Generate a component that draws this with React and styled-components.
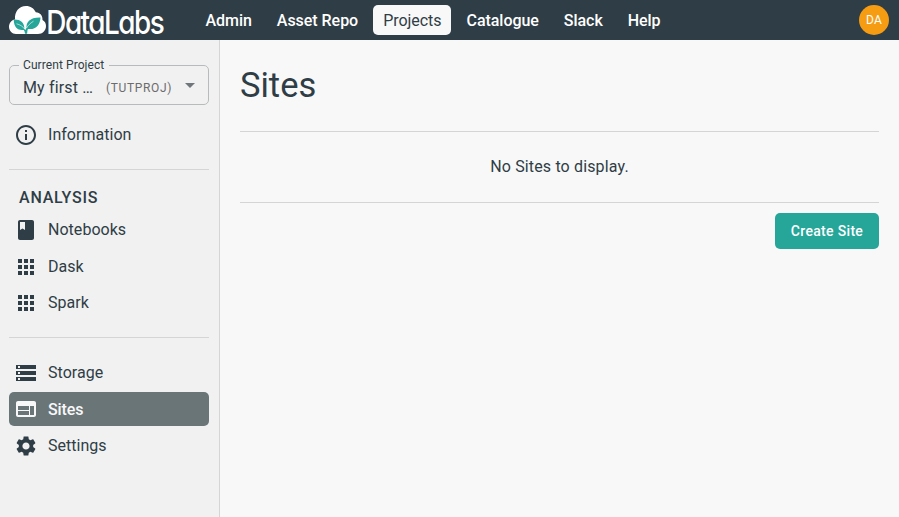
import React from "react";
import styled, { createGlobalStyle } from "styled-components";

const ink = "#2f3d46";

const GlobalStyle = createGlobalStyle`
  *, *::before, *::after { box-sizing: border-box; }
  body {
    margin: 0;
    background: #f8f8f8;
    color: ${ink};
    font: 400 16px/24px Roboto, sans-serif;
    letter-spacing: 0.15px;
  }
`;

const Page = styled.div`
  display: flex;
  flex-direction: column;
  height: 100vh;
  overflow: hidden;
`;

const TopBar = styled.header`
  display: flex;
  align-items: center;
  flex: none;
  height: 40px;
  padding: 0 10px 0 8px;
  background: ${ink};
`;

const Logo = styled.svg`
  display: block;
  width: 160px;
  height: 40px;
  margin-right: 27.5px;
  overflow: visible;
`;

const Wordmark = styled.text`
  fill: #fff;
  font-family: Inter, sans-serif;
  font-size: 33px;
  font-weight: 500;
  font-feature-settings: "cv11";
  letter-spacing: -1.8px;
`;

const Nav = styled.nav`
  display: flex;
  gap: 5px;
`;

const NavLink = styled.a`
  height: 30px;
  padding: 1px 10px 0;
  border-radius: 5px;
  line-height: 30px;
  letter-spacing: -0.04px;
  font-weight: ${(p) => (p.$active ? 400 : 500)};
  color: ${(p) => (p.$active ? ink : "#fff")};
  background: ${(p) => (p.$active ? "#f8f8f8" : "transparent")};
`;

const Avatar = styled.div`
  width: 30px;
  height: 30px;
  margin-left: auto;
  border-radius: 50%;
  background: #f59c12;
  color: #fff;
  font-size: 12px;
  font-weight: 400;
  line-height: 30px;
  text-align: center;
`;

const Body = styled.div`
  display: flex;
  flex: 1;
  min-height: 0;
`;

const Sidebar = styled.aside`
  width: 220px;
  flex: none;
  padding: 19px 10px 0 9px;
  border-right: 1px solid #d5d5d5;
  background: #f1f1f1;
  letter-spacing: 0.03px;
`;

const ProjectSelect = styled.fieldset`
  display: flex;
  align-items: center;
  min-width: 0;
  height: 46px;
  margin: 0;
  padding: 0 6px 0 13px;
  border: 1px solid #b8bbbd;
  border-radius: 5px;
`;

const SelectLabel = styled.legend`
  margin-left: -4px;
  padding: 0 5px 0 4px;
  font-size: 12px;
  line-height: 12px;
  letter-spacing: 0.08px;
`;

const ProjectName = styled.span`
  flex: none;
  width: 71px;
  white-space: nowrap;
  letter-spacing: 0.15px;
`;

const ProjectKey = styled.span`
  margin-left: 12px;
  color: #6c6c6c;
  font-size: 12px;
  letter-spacing: 0.65px;
`;

const Caret = styled.svg`
  width: 24px;
  height: 24px;
  margin: -5px 0 0 auto;
  fill: #70777b;
`;

const Group = styled.div`
  display: grid;
  grid-auto-rows: 34px;
  row-gap: 2.5px;
  padding: ${(p) => p.$pad};
`;

const Item = styled.a`
  display: flex;
  align-items: center;
  gap: 10px;
  padding-left: 5px;
  border-radius: 5px;
  color: ${(p) => (p.$active ? "#f8f8f8" : ink)};
  background: ${(p) => (p.$active ? "#6a7578" : "transparent")};
  font-weight: ${(p) => (p.$active ? 500 : 400)};
  letter-spacing: ${(p) => (p.$active ? "-0.1px" : "0.03px")};
`;

const ItemLabel = styled.span`
  padding-top: ${(p) => (p.$active ? "2px" : 0)};
`;

const ItemIcon = styled.svg`
  width: 24px;
  height: 24px;
  fill: currentColor;
`;

const Rule = styled.hr`
  height: 1px;
  margin: 0;
  border: 0;
  background: #d5d5d5;
`;

const SectionTitle = styled.h2`
  margin: 16px 0 0 10px;
  font-size: 16px;
  line-height: 24px;
  font-weight: 500;
  letter-spacing: 0.8px;
`;

const Main = styled.main`
  flex: 1;
  padding: 20px 20px 0;
`;

const Title = styled.h1`
  margin: 0 0 21px;
  font-size: 34.500px;
  line-height: 50px;
  font-weight: 400;
  letter-spacing: 0;
`;

const EmptyMessage = styled.p`
  margin: 0;
  padding: 23px 0;
  text-align: center;
`;

const Actions = styled.div`
  display: flex;
  justify-content: flex-end;
  padding-top: 10px;
`;

const CreateButton = styled.button`
  width: 104px;
  height: 36px;
  padding: 0;
  border: 0;
  border-radius: 5px;
  background: #25a699;
  color: #fff;
  font: 500 14px/24px Roboto, sans-serif;
  letter-spacing: 0.32px;
`;

const icons = {
  info: "M11 7h2v2h-2zm0 4h2v6h-2zm1-9C6.48 2 2 6.48 2 12s4.48 10 10 10 10-4.48 10-10S17.52 2 12 2zm0 18c-4.41 0-8-3.59-8-8s3.59-8 8-8 8 3.59 8 8-3.59 8-8 8z",
  book: "M18 2H6c-1.1 0-2 .9-2 2v16c0 1.1.9 2 2 2h12c1.1 0 2-.9 2-2V4c0-1.1-.9-2-2-2zM6 4h5v8l-2.500-1.500L6 12V4z",
  apps: "M4 8h4V4H4v4zm6 12h4v-4h-4v4zm-6 0h4v-4H4v4zm0-6h4v-4H4v4zm6 0h4v-4h-4v4zm6-10v4h4V4h-4zm-6 4h4V4h-4v4zm6 6h4v-4h-4v4zm0 6h4v-4h-4v4z",
  storage: "M2 20h20v-4H2v4zm2-3h2v2H4v-2zM2 4v4h20V4H2zm4 3H4V5h2v2zm-4 7h20v-4H2v4zm2-3h2v2H4v-2z",
  web: "M20 4H4c-1.100 0-1.990.9-1.990 2L2 18c0 1.100.9 2 2 2h16c1.100 0 2-.9 2-2V6c0-1.100-.9-2-2-2zm-5 14H4v-4h11v4zm0-5H4V9h11v4zm5 5h-4V9h4v9z",
  settings: "M19.140 12.940c.04-.3.060-.61.060-.94 0-.32-.02-.64-.07-.94l2.030-1.580c.18-.14.230-.41.120-.61l-1.920-3.320c-.12-.22-.37-.29-.59-.22l-2.390.96c-.5-.38-1.030-.7-1.620-.94l-.36-2.540c-.04-.24-.24-.41-.48-.41h-3.840c-.24 0-.43.170-.47.410l-.36 2.540c-.59.240-1.130.570-1.620.94l-2.390-.96c-.22-.08-.47 0-.59.220L2.740 8.870c-.12.210-.08.470.120.610l2.030 1.580c-.05.3-.09.630-.09.940s.02.640.070.940l-2.030 1.580c-.18.140-.23.410-.12.610l1.920 3.320c.12.220.370.290.590.220l2.390-.96c.5.380 1.030.7 1.620.94l.36 2.540c.05.240.240.410.480.410h3.840c.24 0 .44-.17.470-.41l.36-2.540c.59-.24 1.130-.56 1.620-.94l2.390.96c.22.080.470 0 .59-.22l1.920-3.320c.12-.22.070-.47-.12-.61l-2.010-1.580zM12 15.600c-1.980 0-3.600-1.620-3.600-3.600s1.620-3.600 3.600-3.600 3.600 1.620 3.600 3.600-1.620 3.600-3.600 3.600z",
};

function SideItem({ icon, active, children }) {
  return (
    <Item $active={active}>
      <ItemIcon viewBox="0 0 24 24">
        <path d={icons[icon]} />
      </ItemIcon>
      <ItemLabel $active={active}>{children}</ItemLabel>
    </Item>
  );
}

function DataLabsLogo() {
  return (
    <Logo viewBox="8 0 160 40" role="img" aria-label="DataLabs">
      <path
        fill="#fff"
        d="M16 34c-4 0-7-3.200-7-7.200 0-3.700 2.500-6.700 6-7.300C14.500 11.500 19 6 26 6c4.500 0 8 2.300 9.800 6.300 4.400.2 7 3.500 6.700 7.700 2.500 1.300 3.500 3.600 3.500 6 0 4.600-3.500 8-8 8z"
      />
      <path
        fill="#25a699"
        d="M25 33.700c-.1-2.800-1.500-5-4-6.700-1.500-1-3.200-1.800-4.900-2.400 3.600.6 6.800 2.300 9.300 5.300 1.200-3 3.700-5.700 7.700-8.100-3.800 3.300-6 7.200-6 11.900zM24.300 29.700c-5.200.9-10.300-.6-10.600-10.200 6.400-.4 11.300 2.800 10.600 10.200zM26.700 28.700c-1.200-6.500 3.300-11.500 13.800-11.200-.4 8.500-5.500 13-13.800 11.200z"
      />
      <path
        fill="none"
        stroke="#fff"
        strokeWidth="0.600"
        d="M16.500 23.800c3.500.8 6.300 2.600 8.300 5.400M26.600 28c1.200-2.500 3.500-4.600 6.900-6.800"
      />
      <Wordmark transform="translate(46.300 33.500) scale(0.845 1)">DataLabs</Wordmark>
    </Logo>
  );
}

const links = ["Admin", "Asset Repo", "Projects", "Catalogue", "Slack", "Help"];

export default function App() {
  return (
    <Page>
      <GlobalStyle />
      <TopBar>
        <DataLabsLogo />
        <Nav>
          {links.map((name) => (
            <NavLink key={name} $active={name === "Projects"}>
              {name}
            </NavLink>
          ))}
        </Nav>
        <Avatar>DA</Avatar>
      </TopBar>
      <Body>
        <Sidebar>
          <ProjectSelect>
            <SelectLabel>Current Project</SelectLabel>
            <ProjectName>My first …</ProjectName>
            <ProjectKey>(TUTPROJ)</ProjectKey>
            <Caret viewBox="0 0 24 24">
              <path d="M7 10l5 5 5-5z" />
            </Caret>
          </ProjectSelect>
          <Group $pad="13px 0 17px">
            <SideItem icon="info">Information</SideItem>
          </Group>
          <Rule />
          <SectionTitle>ANALYSIS</SectionTitle>
          <Group $pad="3px 0 17px">
            <SideItem icon="book">Notebooks</SideItem>
            <SideItem icon="apps">Dask</SideItem>
            <SideItem icon="apps">Spark</SideItem>
          </Group>
          <Rule />
          <Group $pad="17.5px 0 0">
            <SideItem icon="storage">Storage</SideItem>
            <SideItem icon="web" active>
              Sites
            </SideItem>
            <SideItem icon="settings">Settings</SideItem>
          </Group>
        </Sidebar>
        <Main>
          <Title>Sites</Title>
          <Rule />
          <EmptyMessage>No Sites to display.</EmptyMessage>
          <Rule />
          <Actions>
            <CreateButton>Create Site</CreateButton>
          </Actions>
        </Main>
      </Body>
    </Page>
  );
}
